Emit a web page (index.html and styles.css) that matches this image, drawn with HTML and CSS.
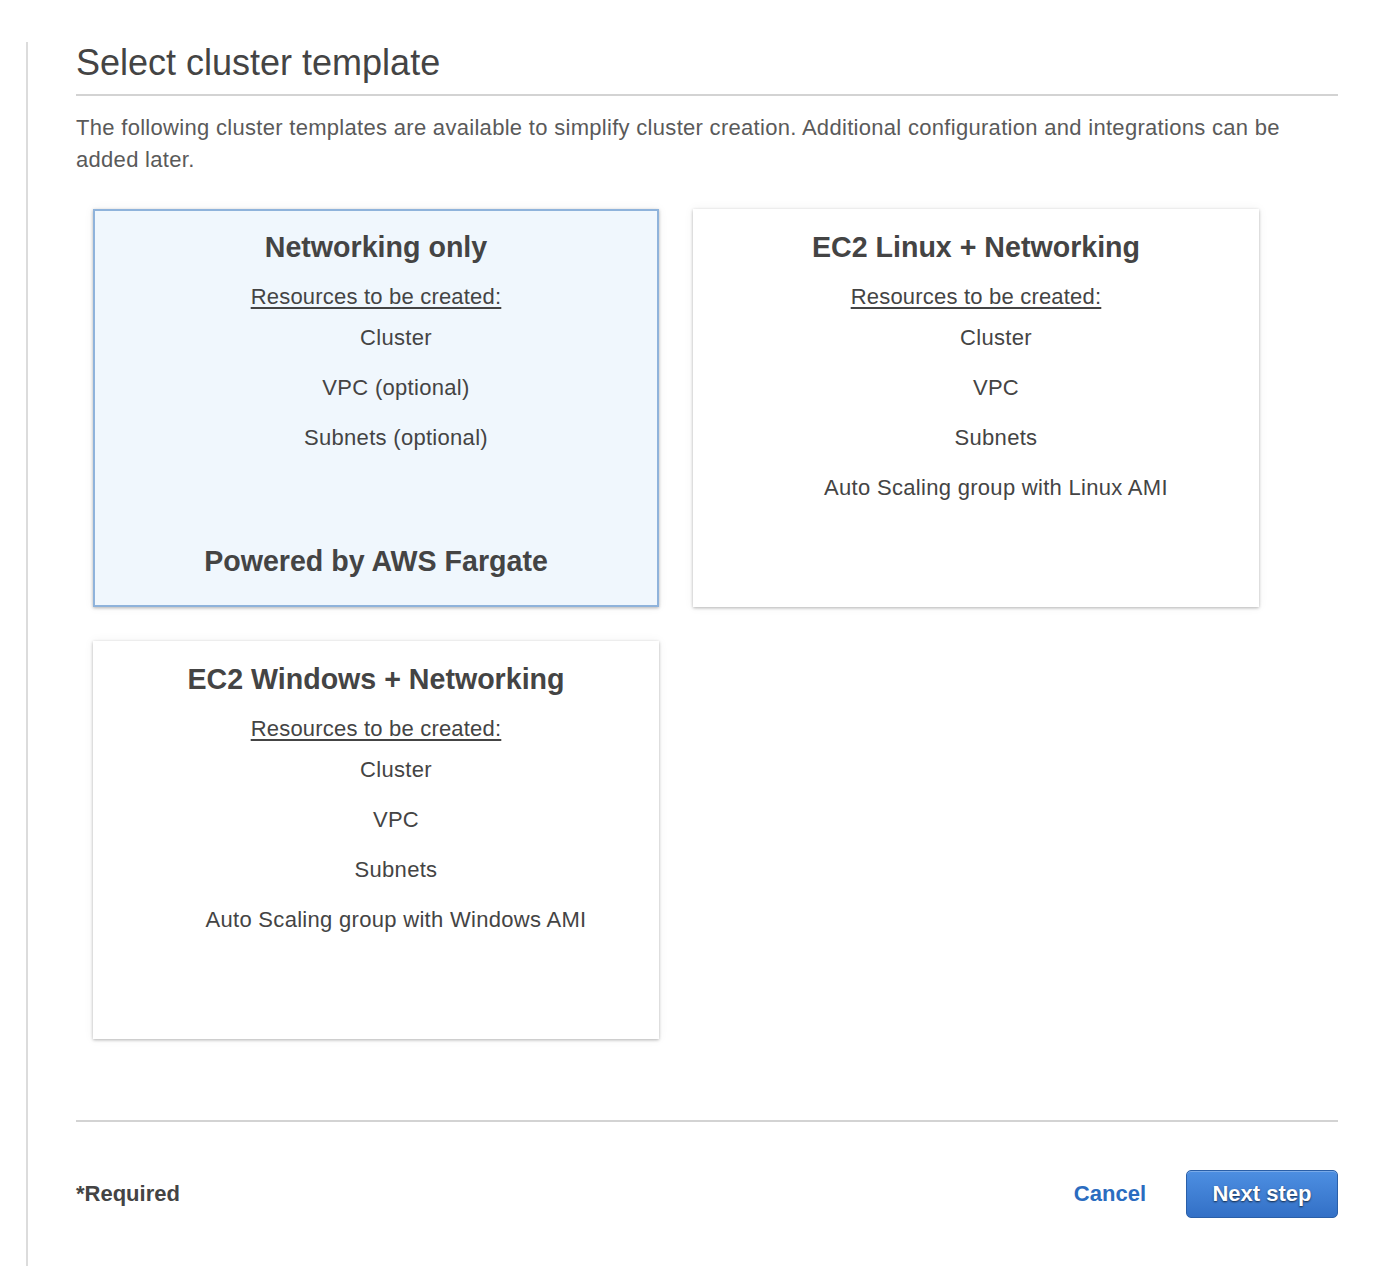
FILE: index.html
```html
<!DOCTYPE html>
<html lang="en">
<head>
<meta charset="utf-8">
<title>Select cluster template</title>
<link rel="stylesheet" href="styles.css">
</head>
<body>
<main class="page">
  <h1 class="page-title">Select cluster template</h1>
  <p class="intro">The following cluster templates are available to simplify cluster creation. Additional configuration and integrations can be added later.</p>

  <div class="cards">
    <section class="card card-selected">
      <h2 class="card-title">Networking only</h2>
      <div class="res-label">Resources to be created:</div>
      <ul class="res-list">
        <li>Cluster</li>
        <li>VPC (optional)</li>
        <li>Subnets (optional)</li>
      </ul>
      <div class="card-foot">Powered by AWS Fargate</div>
    </section>

    <section class="card">
      <h2 class="card-title">EC2 Linux + Networking</h2>
      <div class="res-label">Resources to be created:</div>
      <ul class="res-list">
        <li>Cluster</li>
        <li>VPC</li>
        <li>Subnets</li>
        <li>Auto Scaling group with Linux AMI</li>
      </ul>
    </section>

    <section class="card">
      <h2 class="card-title">EC2 Windows + Networking</h2>
      <div class="res-label">Resources to be created:</div>
      <ul class="res-list">
        <li>Cluster</li>
        <li>VPC</li>
        <li>Subnets</li>
        <li>Auto Scaling group with Windows AMI</li>
      </ul>
    </section>
  </div>

  <hr class="divider">

  <footer class="footer">
    <span class="required">*Required</span>
    <div class="actions">
      <a class="cancel" href="#">Cancel</a>
      <button class="btn-primary" type="button">Next step</button>
    </div>
  </footer>
</main>
</body>
</html>
```

FILE: styles.css
```css
* { box-sizing: border-box; }

html, body {
  margin: 0;
  padding: 0;
  background: #fff;
}

body {
  font-family: "Liberation Sans", Arial, Helvetica, sans-serif;
  color: #444;
}

.page {
  margin: 42px 36px 0 26px;
  border-left: 2px solid #dcdcdc;
  padding-left: 48px;
  min-height: calc(100vh - 42px);
}

.page-title {
  margin: 0;
  font-size: 36px;
  line-height: 42px;
  font-weight: normal;
  color: #444;
  padding-bottom: 10px;
  border-bottom: 2px solid #d3d3d3;
}

.intro {
  margin: 16px 0 0;
  font-size: 22px;
  line-height: 32px;
  letter-spacing: 0.3px;
  color: #5a5a5a;
}

.cards {
  margin-top: 33px;
  padding-left: 17px;
  display: grid;
  grid-template-columns: 566px 566px;
  grid-auto-rows: 398px;
  gap: 34px;
}

.card {
  display: flex;
  flex-direction: column;
  align-items: center;
  background: #fff;
  border: 2px solid #fff;
  box-shadow: 0 1px 3px rgba(0, 0, 0, 0.28), 0 0 10px rgba(0, 0, 0, 0.06);
  padding: 19px 0 27px;
  text-align: center;
}

.card-selected {
  background: #f0f7fd;
  border-color: #8fb3db;
}

.card-title {
  margin: 0;
  font-size: 28.6px;
  line-height: 34px;
  font-weight: bold;
  color: #444;
}

.res-label {
  margin-top: 17px;
  font-size: 22px;
  line-height: 32px;
  letter-spacing: 0.2px;
  text-decoration: underline;
  text-underline-offset: 3px;
  color: #444;
}

.res-list {
  list-style: none;
  margin: 0;
  padding: 0 0 0 40px;
  width: 100%;
}

.res-list li {
  font-size: 22px;
  line-height: 50px;
  letter-spacing: 0.3px;
  color: #444;
}

.card-foot {
  margin-top: auto;
  font-size: 28.6px;
  line-height: 34px;
  font-weight: bold;
  color: #444;
}

.divider {
  margin: 81px 0 0;
  border: 0;
  height: 2px;
  background: #d3d3d3;
}

.footer {
  margin-top: 48px;
  display: flex;
  align-items: center;
  justify-content: space-between;
}

.required {
  font-size: 22px;
  font-weight: bold;
  color: #444;
}

.actions {
  display: flex;
  align-items: center;
  gap: 40px;
}

.cancel {
  font-size: 22px;
  font-weight: bold;
  color: #2b6cc0;
  text-decoration: none;
}

.btn-primary {
  width: 152px;
  height: 48px;
  font-family: inherit;
  font-size: 22px;
  font-weight: bold;
  color: #fff;
  text-shadow: 0 1px 2px rgba(0, 0, 0, 0.7);
  background: linear-gradient(#4d8fe2, #3370c6);
  border: 1px solid #2a5fa8;
  border-radius: 5px;
  box-shadow: inset 0 1px 0 rgba(255, 255, 255, 0.25);
  padding: 0;
  cursor: pointer;
}
```
